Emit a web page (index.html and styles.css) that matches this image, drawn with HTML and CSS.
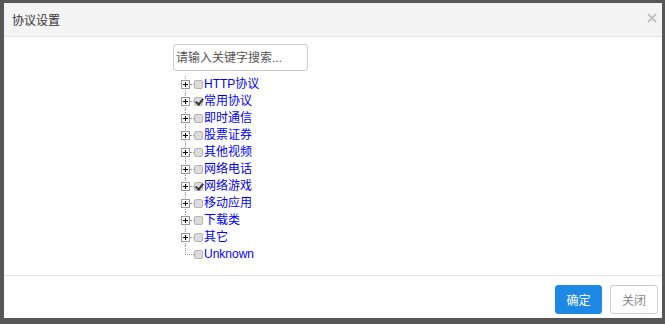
FILE: index.html
```html
<!DOCTYPE html>
<html lang="zh-CN">
<head>
    <meta charset="UTF-8">
    <title>协议设置</title>
    <link rel="stylesheet" href="styles.css">
</head>
<body>
    <div class="modal">
        <div class="modal_header">
            <span class="modal_title">协议设置</span>
            <span class="modal_close">
                <svg width="10" height="10" viewBox="0 0 10 10"><path d="M1 1L9 9M9 1L1 9" stroke="#c2c2c2" stroke-width="2"/></svg>
            </span>
        </div>
        <div class="modal_body">
            <input class="search_input" type="text" placeholder="请输入关键字搜索...">
            <ul class="tree">
                <li class="tree_item"><span class="tree_switch"></span><span class="tree_join"></span><span class="tree_check"></span><a class="tree_title">HTTP协议</a></li>
                <li class="tree_item"><span class="tree_switch"></span><span class="tree_join"></span><span class="tree_check checked"></span><a class="tree_title">常用协议</a></li>
                <li class="tree_item"><span class="tree_switch"></span><span class="tree_join"></span><span class="tree_check"></span><a class="tree_title">即时通信</a></li>
                <li class="tree_item"><span class="tree_switch"></span><span class="tree_join"></span><span class="tree_check"></span><a class="tree_title">股票证券</a></li>
                <li class="tree_item"><span class="tree_switch"></span><span class="tree_join"></span><span class="tree_check"></span><a class="tree_title">其他视频</a></li>
                <li class="tree_item"><span class="tree_switch"></span><span class="tree_join"></span><span class="tree_check"></span><a class="tree_title">网络电话</a></li>
                <li class="tree_item"><span class="tree_switch"></span><span class="tree_join"></span><span class="tree_check checked"></span><a class="tree_title">网络游戏</a></li>
                <li class="tree_item"><span class="tree_switch"></span><span class="tree_join"></span><span class="tree_check"></span><a class="tree_title">移动应用</a></li>
                <li class="tree_item"><span class="tree_switch"></span><span class="tree_join"></span><span class="tree_check"></span><a class="tree_title">下载类</a></li>
                <li class="tree_item"><span class="tree_switch"></span><span class="tree_join"></span><span class="tree_check"></span><a class="tree_title">其它</a></li>
                <li class="tree_item tree_last"><span class="tree_corner"></span><span class="tree_check"></span><a class="tree_title">Unknown</a></li>
            </ul>
        </div>
        <div class="modal_footer">
            <button class="btn btn_primary">确定</button>
            <button class="btn btn_default">关闭</button>
        </div>
    </div>
</body>
</html>
```

FILE: styles.css
```css
html,body{
    padding:0;
    margin:0;
    width:100%;
    height:100%;
    background:#575757;
    font-family:"Liberation Sans","Noto Sans CJK SC",sans-serif;
    font-size:12px;
}
.modal{
    display:flex;
    flex-direction:column;
    box-sizing:border-box;
    margin:3px 0 0 4px;
    width:658px;
    height:315px;
    background:#fff;
}
.modal_header{
    display:flex;
    align-items:center;
    justify-content:space-between;
    box-sizing:border-box;
    height:34px;
    padding:0 5px 0 8px;
    background:#f4f4f4;
    border-bottom:1px solid #e3e3e3;
}
.modal_title{
    color:#333;
    font-size:12px;
}
.modal_close{
    display:flex;
    margin-top:-3px;
}
.modal_body{
    flex:1;
    padding:7px 0 0 169px;
}
.search_input{
    display:block;
    box-sizing:border-box;
    width:135px;
    height:27px;
    padding:0 2px;
    border:1px solid #ccc;
    border-radius:3px;
    font-family:inherit;
    font-size:12px;
    outline:none;
}
.search_input::placeholder{
    color:#555;
}
.tree{
    list-style:none;
    margin:5px 0 0 0;
    padding:0 0 0 8px;
}
.tree_item{
    display:flex;
    align-items:center;
    position:relative;
    height:17px;
}
.tree_item::before{
    content:"";
    position:absolute;
    left:4px;
    top:0;
    bottom:0;
    border-left:1px dotted #999;
}
.tree_item.tree_last::before{
    display:none;
}
.tree_switch{
    display:inline-block;
    position:relative;
    z-index:1;
    box-sizing:border-box;
    width:9px;
    height:9px;
    border:1px solid #9a9a9a;
    background:#fff;
}
.tree_switch::before{
    content:"";
    position:absolute;
    left:1px;
    top:3px;
    width:5px;
    height:1px;
    background:#000;
}
.tree_switch::after{
    content:"";
    position:absolute;
    left:3px;
    top:1px;
    width:1px;
    height:5px;
    background:#000;
}
.tree_join{
    display:inline-block;
    width:4px;
    border-top:1px dotted #999;
}
.tree_corner{
    display:inline-block;
    align-self:flex-start;
    box-sizing:border-box;
    margin-left:4px;
    width:9px;
    height:9px;
    border-left:1px dotted #999;
    border-bottom:1px dotted #999;
}
.tree_check{
    display:inline-block;
    position:relative;
    box-sizing:border-box;
    width:9px;
    height:9px;
    margin-right:1px;
    border:1px solid #b5b5b5;
    border-radius:2px;
    background:#dcdcdc;
}
.tree_check.checked::after{
    content:"";
    position:absolute;
    left:2px;
    top:-1px;
    width:3px;
    height:6px;
    border-right:2px solid #333;
    border-bottom:2px solid #333;
    transform:rotate(40deg);
}
.tree_title{
    color:#0000ff;
    font-size:12px;
    line-height:17px;
    white-space:nowrap;
}
.modal_footer{
    display:flex;
    justify-content:flex-end;
    gap:8px;
    box-sizing:border-box;
    height:43px;
    padding:9px 4px 0 0;
    border-top:1px solid #e5e5e5;
}
.btn{
    box-sizing:border-box;
    height:29px;
    padding:0;
    border-radius:3px;
    font-family:inherit;
    font-size:12px;
}
.btn_primary{
    width:47px;
    color:#fff;
    background:#1e88e5;
    border:1px solid #1e88e5;
}
.btn_default{
    width:48px;
    color:#888;
    background:#fff;
    border:1px solid #ccc;
}
```
